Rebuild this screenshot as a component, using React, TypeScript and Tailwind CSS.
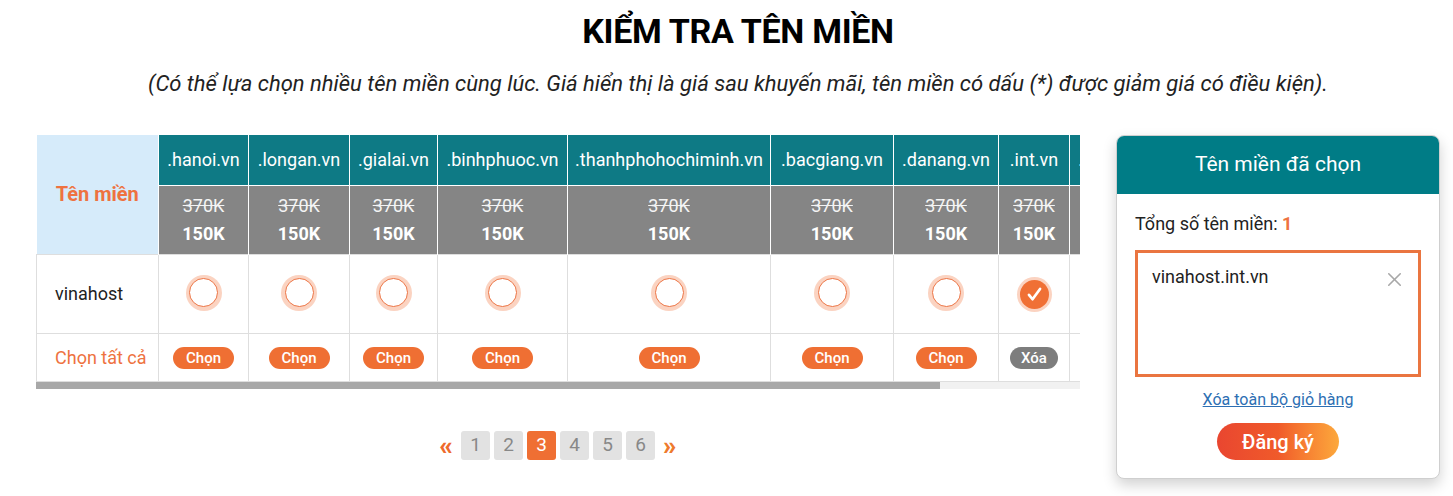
import { X } from 'lucide-react'

type Col = { name: string; w: number; checked?: boolean }

const cols: Col[] = [
  { name: '.hanoi.vn', w: 90 },
  { name: '.longan.vn', w: 101 },
  { name: '.gialai.vn', w: 88 },
  { name: '.binhphuoc.vn', w: 130 },
  { name: '.thanhphohochiminh.vn', w: 203 },
  { name: '.bacgiang.vn', w: 123 },
  { name: '.danang.vn', w: 105 },
  { name: '.int.vn', w: 71, checked: true },
  { name: '.quangninh.vn', w: 130 },
]

function Radio({ checked }: { checked?: boolean }) {
  if (checked) {
    return (
      <span className="inline-flex h-[35px] w-[35px] items-center justify-center rounded-full bg-[#fbd3c1]">
        <span className="flex h-[29px] w-[29px] items-center justify-center rounded-full bg-[#f07035]">
          <svg viewBox="0 0 24 24" className="h-[19px] w-[19px]" fill="none" stroke="white" strokeWidth="3.4" strokeLinecap="round" strokeLinejoin="round">
            <path d="M5 12.5l4.5 5.5L19 5" />
          </svg>
        </span>
      </span>
    )
  }
  return (
    <span className="inline-flex h-[36px] w-[36px] items-center justify-center rounded-full bg-[#fbd3c1]">
      <span className="h-[29px] w-[29px] rounded-full border-[1.5px] border-[#ec7444] bg-white" />
    </span>
  )
}

export default function App() {
  return (
    <div className="min-h-[496px] bg-white font-['Roboto',sans-serif] text-[#222]">
      <div className="ml-[36px] w-[1404px]">
        <h1 className="pt-[11px] text-center text-[34px] font-bold leading-[40px] tracking-[-0.3px] text-black">
          KIỂM TRA TÊN MIỀN
        </h1>
        <p className="mt-[19px] text-center text-[22px] italic leading-[28px] text-[#222]">
          (Có thể lựa chọn nhiều tên miền cùng lúc. Giá hiển thị là giá sau khuyến mãi, tên miền có dấu (*) được giảm giá có điều kiện).
        </p>

        <div className="mt-[37px] flex items-start gap-[36px]">
          <div className="w-[1044px]">
            <div className="w-[1044px] overflow-hidden">
              <table className="border-collapse text-[18px]" style={{ width: 'max-content' }}>
                <tbody>
                  <tr className="h-[50px]">
                    <th rowSpan={2} className="w-[122px] min-w-[122px] border-r border-white bg-[#d6ebfa] text-center text-[20px] font-bold text-[#ee7240]">
                      Tên miền
                    </th>
                    {cols.map((c) => (
                      <th
                        key={c.name}
                        style={{ minWidth: c.w, width: c.w }}
                        className="border-x border-b border-white bg-[#0e7a85] px-[4px] text-center text-[18px] font-normal whitespace-nowrap text-white"
                      >
                        {c.name}
                      </th>
                    ))}
                  </tr>
                  <tr className="h-[69px]">
                    {cols.map((c) => (
                      <td key={c.name} className="border-x border-white bg-[#858585] text-center leading-[28px] text-white">
                        <div className="text-[18px] text-[#f4f4f4] line-through">370K</div>
                        <div className="text-[18px] font-bold">150K</div>
                      </td>
                    ))}
                  </tr>
                  <tr className="h-[79px]">
                    <td className="border border-[#dedede] pl-[18px] text-[18px] text-[#222]">vinahost</td>
                    {cols.map((c) => (
                      <td key={c.name} className="border border-[#dedede] text-center align-middle">
                        <span className="inline-flex translate-y-[1px]">
                          <Radio checked={c.checked} />
                        </span>
                      </td>
                    ))}
                  </tr>
                  <tr className="h-[48px]">
                    <td className="border border-[#dedede] pl-[18px] text-[18px] whitespace-nowrap text-[#ee7240]">Chọn tất cả</td>
                    {cols.map((c) => (
                      <td key={c.name} className="border border-[#dedede] text-center align-middle">
                        <span
                          className={
                            c.checked
                              ? 'inline-block -translate-y-[1px] rounded-full bg-[#7d7d7d] px-[11px] text-[15px] leading-[22px] font-medium text-white'
                              : 'inline-block -translate-y-[1px] rounded-full bg-[#ef6f33] px-[13px] text-[15px] leading-[22px] font-medium text-white'
                          }
                        >
                          {c.checked ? 'Xóa' : 'Chọn'}
                        </span>
                      </td>
                    ))}
                  </tr>
                </tbody>
              </table>
            </div>
            <div className="h-[7px] w-[1044px] bg-[#f1f1f1]">
              <div className="h-[7px] w-[904px] bg-[#a8a8a8]" />
            </div>

            <div className="mt-[42px] flex items-center justify-center gap-[4px]">
              <span className="mr-[4px] text-[26px] leading-none font-black text-[#ee6a2c]">«</span>
              {[1, 2, 3, 4, 5, 6].map((n) => (
                <span
                  key={n}
                  className={
                    n === 3
                      ? 'flex h-[29px] w-[29px] items-center justify-center rounded-[3px] bg-[#ef6f33] text-[19px] text-white'
                      : 'flex h-[29px] w-[29px] items-center justify-center rounded-[3px] bg-[#e2e2e2] text-[19px] text-[#888]'
                  }
                >
                  {n}
                </span>
              ))}
              <span className="ml-[4px] text-[26px] leading-none font-black text-[#ee7a2c]">»</span>
            </div>
          </div>

          <div className="w-[324px] overflow-hidden rounded-[8px] border border-[#cfcfcf] bg-white shadow-[0_6px_14px_rgba(0,0,0,0.18)]">
            <div className="flex h-[58px] items-center justify-center bg-[#007c86] text-[21px] text-white">
              Tên miền đã chọn
            </div>
            <div className="px-[18px] pt-[19px] pb-[18px]">
              <div className="text-[18px] leading-[22px] text-[#222]">
                Tổng số tên miền: <span className="font-bold text-[#ee7240]">1</span>
              </div>
              <div className="mt-[15px] flex h-[127px] items-start justify-between border-[3px] border-[#ea7540] pt-[13px] pr-[12px] pl-[14px]">
                <span className="text-[18px] leading-[22px] text-[#222]">vinahost.int.vn</span>
                <X className="mt-[2px] h-[23px] w-[23px] text-[#a8a8a8]" strokeWidth={1.7} />
              </div>
              <div className="mt-[12px] text-center leading-[22px]">
                <span className="text-[16px] text-[#2d6fb3] underline">Xóa toàn bộ giỏ hàng</span>
              </div>
              <div className="mt-[12px] flex justify-center">
                <span className="flex h-[37px] w-[122px] items-center justify-center rounded-full bg-gradient-to-r from-[#e94630] via-[#f05a2a] to-[#fca83c] text-[20px] font-medium text-white">
                  Đăng ký
                </span>
              </div>
            </div>
          </div>
        </div>
      </div>
    </div>
  )
}
